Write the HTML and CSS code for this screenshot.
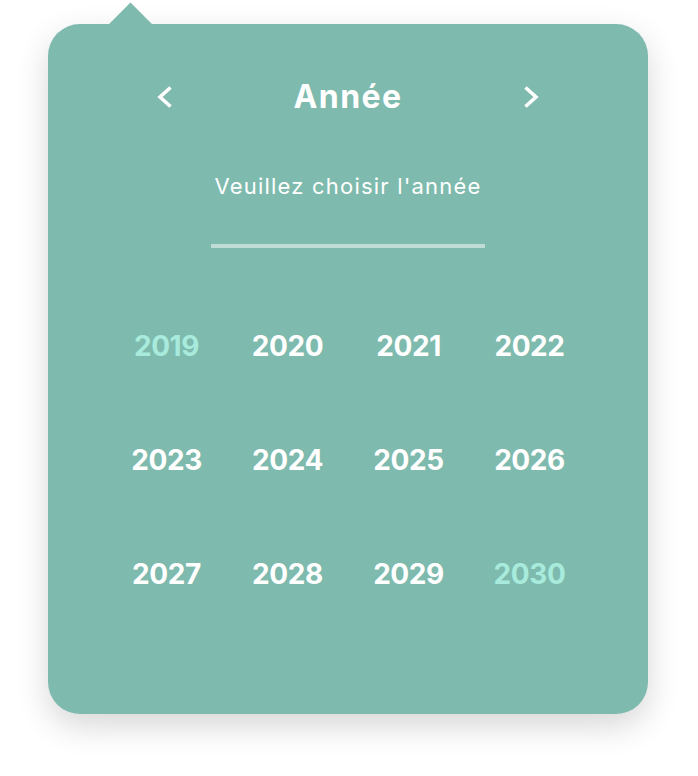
FILE: index.html
```html
<!DOCTYPE html>
<html lang="fr">
<head>
<meta charset="utf-8">
<title>Année</title>
<link rel="stylesheet" href="styles.css">
</head>
<body>
<div class="page">
  <div class="card">
    <span class="pointer"></span>
    <div class="header">
      <button class="nav" aria-label="Précédent">
        <svg width="18" height="22" viewBox="0 0 18 22"><polyline points="15.5,1.5 5,11 15.5,20.5" fill="none" stroke="#fff" stroke-width="3.6" stroke-linecap="butt" stroke-linejoin="miter"/></svg>
      </button>
      <h1 class="title">Année</h1>
      <button class="nav" aria-label="Suivant">
        <svg width="18" height="22" viewBox="0 0 18 22"><polyline points="2.5,1.5 13,11 2.5,20.5" fill="none" stroke="#fff" stroke-width="3.6" stroke-linecap="butt" stroke-linejoin="miter"/></svg>
      </button>
    </div>
    <p class="subtitle">Veuillez choisir l'année</p>
    <div class="rule"></div>
    <div class="years">
      <span class="year muted">2019</span>
      <span class="year">2020</span>
      <span class="year">2021</span>
      <span class="year">2022</span>
      <span class="year">2023</span>
      <span class="year">2024</span>
      <span class="year">2025</span>
      <span class="year">2026</span>
      <span class="year">2027</span>
      <span class="year">2028</span>
      <span class="year">2029</span>
      <span class="year muted">2030</span>
    </div>
  </div>
</div>
</body>
</html>
```
FILE: styles.css
```css
* { box-sizing: border-box; }
html, body { margin: 0; padding: 0; background: #fff; }
body { font-family: Inter, "Noto Sans", sans-serif; color: #fff; }
.page { padding: 24px 0 62px 48px; }
.card {
  position: relative;
  width: 600px;
  height: 690px;
  background: #7ebaad;
  border-radius: 32px;
  box-shadow: 0 12px 32px rgba(0,0,0,0.16);
  padding-top: 53px;
  display: flex;
  flex-direction: column;
  align-items: center;
}
.pointer {
  position: absolute;
  left: 66.5px;
  top: -15.5px;
  width: 31px;
  height: 31px;
  background: #7ebaad;
  transform: rotate(45deg);
}
.header {
  width: 392px;
  height: 40px;
  display: flex;
  align-items: center;
  justify-content: space-between;
}
.nav {
  background: none;
  border: 0;
  padding: 0;
  width: 24px;
  height: 24px;
  display: flex;
  align-items: center;
  justify-content: center;
  cursor: pointer;
}
.title {
  margin: 0;
  font-size: 32px;
  font-weight: 700;
  line-height: 40px;
  letter-spacing: 1.4px;
}
.subtitle {
  margin: 57px 0 0;
  font-size: 22px;
  font-weight: 400;
  line-height: 24px;
  letter-spacing: 1.2px;
}
.rule {
  margin-top: 46px;
  width: 274px;
  height: 4px;
  background: rgba(255,255,255,0.5);
}
.years {
  margin-top: 41px;
  width: 484px;
  display: grid;
  grid-template-columns: repeat(4, 121px);
  grid-auto-rows: 114px;
}
.year {
  display: flex;
  align-items: center;
  justify-content: center;
  font-size: 28px;
  font-weight: 700;
  letter-spacing: -0.4px;
}
.year.muted { color: #a8ebdc; }
```
